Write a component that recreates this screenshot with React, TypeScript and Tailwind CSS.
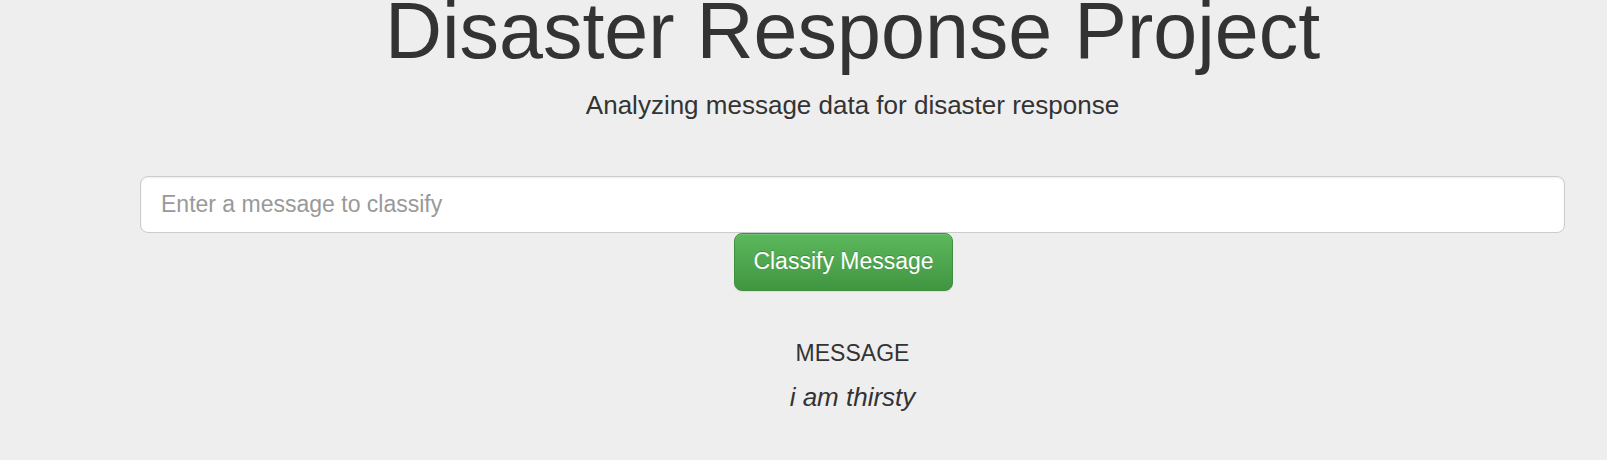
export default function App() {
  return (
    <main className="min-h-screen bg-[#eeeeee] pl-[140px] pr-[42px] text-center font-['Liberation_Sans',Arial,sans-serif] text-[#333333]">
      <h1 className="text-[79px] leading-[62px]">Disaster Response Project</h1>
      <p className="pt-[23px] text-[26px] leading-10">Analyzing message data for disaster response</p>
      <form className="mt-[51px]" onSubmit={(e) => e.preventDefault()}>
        <input
          type="text"
          aria-label="Enter a message to classify"
          placeholder="Enter a message to classify"
          className="block h-[57px] w-full rounded-[8px] border border-[#cccccc] bg-white px-5 text-[23px] shadow-[inset_0_1px_2px_rgba(0,0,0,0.075)] outline-none placeholder:text-[#999999]"
        />
        <div className="flex justify-center pr-[18px]">
          <button
            type="submit"
            className="h-[58px] rounded-[8px] border border-[#3e8f3e] bg-linear-to-b from-[#5cb85c] to-[#419641] px-[18px] pb-0.5 text-[23px] text-white shadow-[inset_0_1px_0_rgba(255,255,255,0.15),0_1px_1px_rgba(0,0,0,0.075)] [text-shadow:0_-1px_0_rgba(0,0,0,0.2)]"
          >
            Classify Message
          </button>
        </div>
      </form>
      <h2 className="mt-[47px] text-[23px] leading-[30px]">MESSAGE</h2>
      <p className="mt-[13px] text-[26px] italic leading-8">i am thirsty</p>
    </main>
  );
}
